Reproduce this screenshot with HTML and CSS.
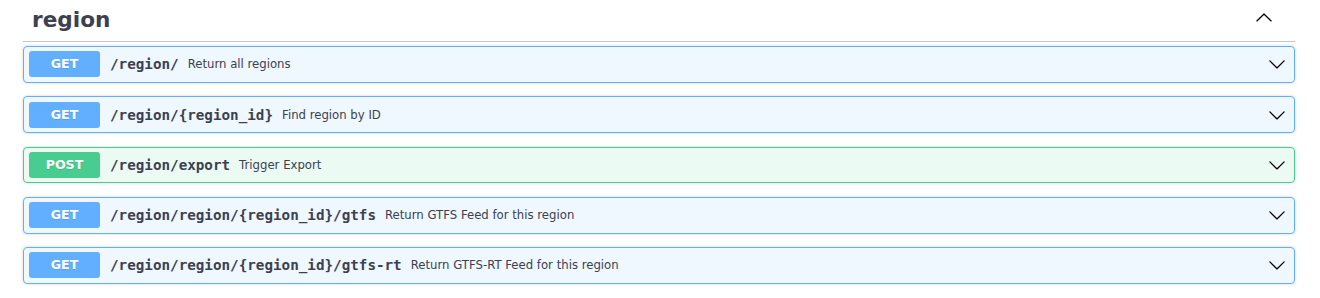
FILE: index.html
```html
<!DOCTYPE html>
<html>
<head>
<meta charset="utf-8">
<link rel="stylesheet" href="styles.css">
</head>
<body>
<div class="wrapper">
  <div class="tag">
    <h3 class="tag-title">region</h3>
    <svg class="arrow-up" width="18" height="18" viewBox="0 0 20 20"><path d="M17.418 14.908c.272.268.709.268.979 0s.271-.701 0-.969l-7.908-7.83c-.27-.268-.707-.268-.979 0l-7.908 7.83c-.27.268-.27.701 0 .969.271.268.709.268.979 0L10 7.75l7.418 7.158z"/></svg>
  </div>

  <div class="opblock get">
    <span class="method">GET</span>
    <span class="path">/region/</span>
    <span class="desc">Return all regions</span>
    <svg class="arrow" width="18" height="18" viewBox="0 0 20 20"><path d="M17.418 6.109c.272-.268.709-.268.979 0s.271.701 0 .969l-7.908 7.83c-.27.268-.707.268-.979 0l-7.908-7.830c-.27-.268-.27-.701 0-.969.271-.268.709-.268.979 0L10 13.25l7.418-7.141z"/></svg>
  </div>

  <div class="opblock get">
    <span class="method">GET</span>
    <span class="path">/region/{region_id}</span>
    <span class="desc">Find region by ID</span>
    <svg class="arrow" width="18" height="18" viewBox="0 0 20 20"><path d="M17.418 6.109c.272-.268.709-.268.979 0s.271.701 0 .969l-7.908 7.83c-.27.268-.707.268-.979 0l-7.908-7.830c-.27-.268-.27-.701 0-.969.271-.268.709-.268.979 0L10 13.25l7.418-7.141z"/></svg>
  </div>

  <div class="opblock post">
    <span class="method">POST</span>
    <span class="path">/region/export</span>
    <span class="desc">Trigger Export</span>
    <svg class="arrow" width="18" height="18" viewBox="0 0 20 20"><path d="M17.418 6.109c.272-.268.709-.268.979 0s.271.701 0 .969l-7.908 7.83c-.27.268-.707.268-.979 0l-7.908-7.830c-.27-.268-.27-.701 0-.969.271-.268.709-.268.979 0L10 13.25l7.418-7.141z"/></svg>
  </div>

  <div class="opblock get">
    <span class="method">GET</span>
    <span class="path">/region/region/{region_id}/gtfs</span>
    <span class="desc">Return GTFS Feed for this region</span>
    <svg class="arrow" width="18" height="18" viewBox="0 0 20 20"><path d="M17.418 6.109c.272-.268.709-.268.979 0s.271.701 0 .969l-7.908 7.83c-.27.268-.707.268-.979 0l-7.908-7.830c-.27-.268-.27-.701 0-.969.271-.268.709-.268.979 0L10 13.25l7.418-7.141z"/></svg>
  </div>

  <div class="opblock get">
    <span class="method">GET</span>
    <span class="path">/region/region/{region_id}/gtfs-rt</span>
    <span class="desc">Return GTFS-RT Feed for this region</span>
    <svg class="arrow" width="18" height="18" viewBox="0 0 20 20"><path d="M17.418 6.109c.272-.268.709-.268.979 0s.271.701 0 .969l-7.908 7.83c-.27.268-.707.268-.979 0l-7.908-7.830c-.27-.268-.27-.701 0-.969.271-.268.709-.268.979 0L10 13.25l7.418-7.141z"/></svg>
  </div>
</div>
</body>
</html>
```

FILE: styles.css
```css
html, body {
  margin: 0;
  padding: 0;
  background: #ffffff;
}
body {
  font-family: "DejaVu Sans", sans-serif;
  color: #3b4151;
}
.wrapper {
  padding: 0 25px 0 23px;
}
.tag {
  display: flex;
  align-items: flex-start;
  height: 42px;
  box-sizing: border-box;
  padding: 7px 22px 0 9px;
  border-bottom: 1px solid rgba(59, 65, 81, 0.3);
  margin-bottom: 4px;
}
.tag-title {
  margin: 0;
  flex: 1;
  font-size: 21.6px;
  font-weight: bold;
  line-height: 25px;
  color: #3b4151;
}
.arrow-up {
  margin-top: 0.6px;
  fill: #000;
}
.opblock {
  display: flex;
  align-items: center;
  box-sizing: border-box;
  height: 36.75px;
  padding: 0 8px 0 5px;
  margin-bottom: 13.5px;
  border: 1px solid;
  border-radius: 4px;
  box-shadow: 0 0 3px rgba(0, 0, 0, 0.19);
}
.opblock.get {
  background: rgba(97, 175, 254, 0.1);
  border-color: #61affe;
}
.opblock.post {
  background: rgba(73, 204, 144, 0.1);
  border-color: #49cc90;
}
.method {
  display: inline-block;
  width: 71px;
  height: 26px;
  line-height: 26px;
  text-align: center;
  border-radius: 3px;
  color: #fff;
  font-size: 12.6px;
  font-weight: bold;
  text-shadow: 0 1px 0 rgba(0, 0, 0, 0.1);
}
.get .method { background: #61affe; }
.post .method { background: #49cc90; }
.path {
  font-family: "DejaVu Sans Mono", monospace;
  font-weight: bold;
  font-size: 14.25px;
  padding: 0 9px 0 10px;
  color: #3b4151;
}
.desc {
  flex: 1;
  font-size: 11.7px;
  color: #3b4151;
}
.arrow {
  fill: #000;
}
```
